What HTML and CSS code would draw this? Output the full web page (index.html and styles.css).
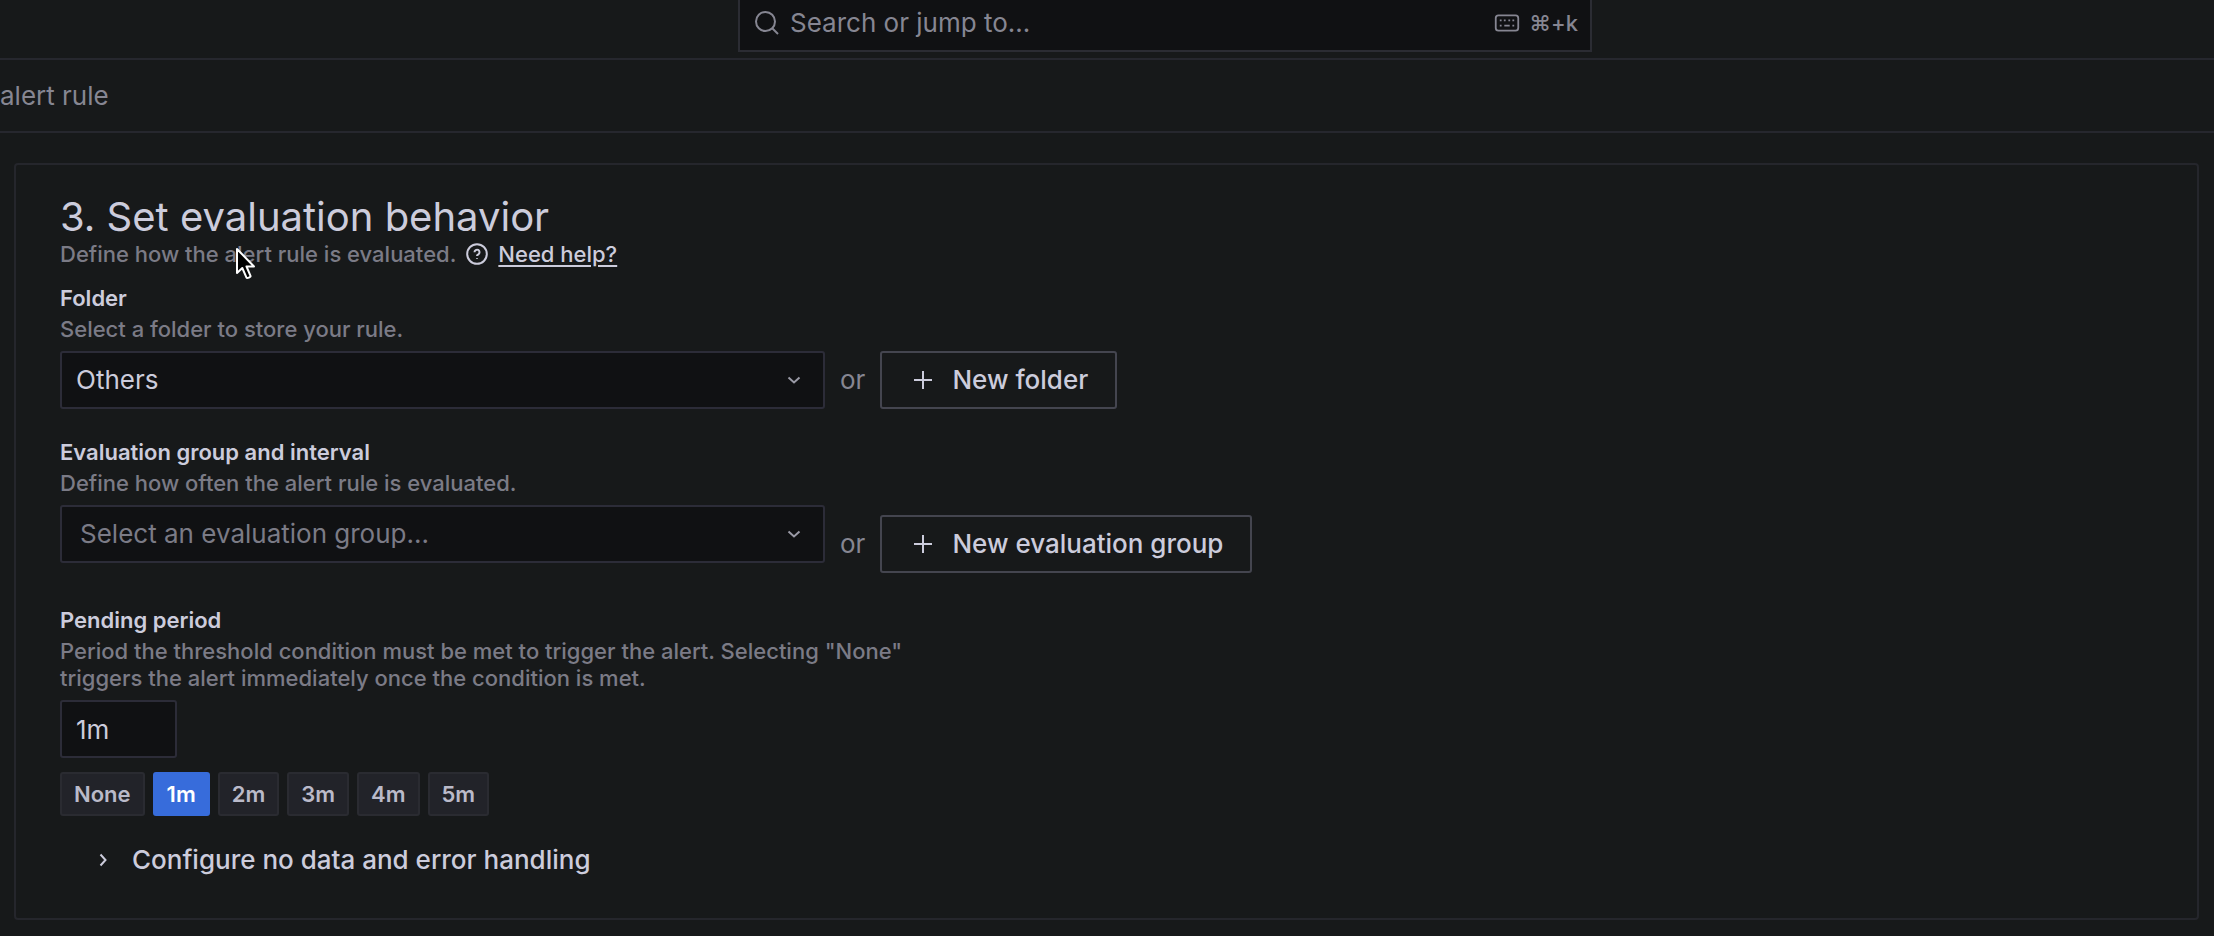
FILE: index.html
```html
<!DOCTYPE html>
<html lang="en">
<head>
<meta charset="utf-8">
<title>Alert rule</title>
<link rel="stylesheet" href="styles.css">
</head>
<body>
<header class="topbar">
  <label class="search">
    <svg class="search-icon" viewBox="0 0 26 26" aria-hidden="true"><circle cx="11.5" cy="11.5" r="9.5"/><path d="M18.5 18.5 24 24"/></svg>
    <input class="search-input" type="text" placeholder="Search or jump to..." aria-label="Search or jump to">
    <svg class="keyboard-icon" viewBox="0 0 28 20" aria-hidden="true"><rect x="1.5" y="1.5" width="25" height="17" rx="3"/><path d="M6 7h2M10.500 7h2M15.500 7h2M20 7h2M6 13h2M11 13h6M20 13h2"/></svg>
    <span class="shortcut">⌘+k</span>
  </label>
</header>
<nav class="breadcrumbs" aria-label="Breadcrumbs"><span>alert rule</span></nav>
<main class="panel">
  <h2 class="title">3. Set evaluation behavior</h2>
  <div class="intro">
    <span>Define how the alert rule is evaluated.</span>
    <svg class="help-icon" viewBox="0 0 22 22" aria-hidden="true"><circle cx="11" cy="11" r="9.800"/><path d="M8.500 9.200a2.500 2.500 0 1 1 3.800 2.100c-.9.500-1.300.8-1.300 1.600M11 15.200v.9"/></svg>
    <a class="help-link" href="#help">Need help?</a>
  </div>

  <section class="field">
    <label class="label" for="folder">Folder</label>
    <p class="description">Select a folder to store your rule.</p>
    <div class="row">
      <div class="select">
        <select id="folder"><option>Others</option></select>
        <svg class="caret" viewBox="0 0 14 14" aria-hidden="true"><path d="m1.500 4.500 5.500 5 5.500-5"/></svg>
      </div>
      <span class="or">or</span>
      <button class="button" type="button"><svg class="plus" viewBox="0 0 20 20" aria-hidden="true"><path d="M10 1v18M1 10h18"/></svg>New folder</button>
    </div>
  </section>

  <section class="field">
    <label class="label" for="group">Evaluation group and interval</label>
    <p class="description">Define how often the alert rule is evaluated.</p>
    <div class="row row-tall">
      <div class="select select-empty">
        <select id="group"><option>Select an evaluation group...</option></select>
        <svg class="caret" viewBox="0 0 14 14" aria-hidden="true"><path d="m1.500 4.500 5.500 5 5.500-5"/></svg>
      </div>
      <span class="or">or</span>
      <button class="button" type="button"><svg class="plus" viewBox="0 0 20 20" aria-hidden="true"><path d="M10 1v18M1 10h18"/></svg>New evaluation group</button>
    </div>
  </section>

  <section class="field field-last">
    <label class="label" for="pending">Pending period</label>
    <p class="description">Period the threshold condition must be met to trigger the alert. Selecting "None"<br>triggers the alert immediately once the condition is met.</p>
    <input class="period" id="pending" type="text" value="1m">
    <div class="chips">
      <button class="chip" type="button">None</button>
      <button class="chip chip-active" type="button">1m</button>
      <button class="chip" type="button">2m</button>
      <button class="chip" type="button">3m</button>
      <button class="chip" type="button">4m</button>
      <button class="chip" type="button">5m</button>
    </div>
  </section>

  <button class="collapse" type="button" aria-expanded="false"><svg class="chevron" viewBox="0 0 14 14" aria-hidden="true"><path d="m4.500 1.500 5 5.500-5 5.500"/></svg>Configure no data and error handling</button>
</main>
<svg class="cursor" viewBox="0 0 22 34" aria-hidden="true"><path d="M2 2v24l5.300-5 4.200 9.600c.5 1.100 4.500-.5 4-1.700L11.500 19.500H19z"/></svg>
</body>
</html>
```

FILE: styles.css
```css
* { box-sizing: border-box; }

body {
  margin: 0;
  background: #17191a;
  color: #ccccdc;
  font-family: Inter, "Liberation Sans", sans-serif;
  font-size: 26px;
  line-height: 30px;
}

svg { fill: none; stroke: currentColor; stroke-width: 2; flex: none; }

button, input, select { font: inherit; color: inherit; }

.topbar {
  display: grid;
  grid-template-columns: 738fr 854fr 622fr;
  height: 60px;
  border-bottom: 2px solid #26272e;
}

.search {
  grid-column: 2;
  display: flex;
  align-items: center;
  height: 52px;
  padding: 0 12px 5px 14px;
  border: 2px solid #2b2c33;
  border-top: 0;
  background: #101113;
  color: #868692;
}

.search-icon { width: 26px; height: 26px; }

.search-input {
  flex: 1;
  min-width: 0;
  padding: 0 0 0 10px;
  border: 0;
  outline: 0;
  background: transparent;
}

.search-input::placeholder { color: inherit; opacity: 1; }
.keyboard-icon { width: 26px; height: 18px; margin-right: 9px; }
.shortcut { font-size: 22px; font-weight: 500; }

.breadcrumbs {
  height: 73px;
  padding: 21px 0;
  border-bottom: 2px solid #26272e;
  color: #868692;
}

.panel {
  margin: 30px 15px 16px 14px;
  padding: 29px 44px 40px;
  border: 2px solid #25262c;
  border-radius: 4px;
}

.title {
  margin: 0;
  font-size: 40px;
  font-weight: 400;
  line-height: 46px;
}

.intro {
  display: flex;
  align-items: center;
  margin-bottom: 17px;
  color: #7b7b86;
  font-size: 22px;
  font-weight: 500;
  line-height: 28px;
}

.help-icon { width: 22px; height: 22px; margin: 0 10px; color: #ccccdc; }
.help-link { color: #ccccdc; text-underline-offset: 3px; }

.field { margin-bottom: 30px; }
.field-last { margin-bottom: 26px; }

.label {
  display: block;
  margin-bottom: 4px;
  font-size: 22px;
  font-weight: 600;
  line-height: 27px;
}

.description {
  margin: 0 0 8px;
  color: #7b7b86;
  font-size: 22px;
  font-weight: 500;
  line-height: 27px;
}

.row { display: flex; align-items: flex-end; gap: 15px; color: #868692; }
.row-tall { height: 68px; margin-bottom: 34px; }

.select {
  display: grid;
  align-self: flex-start;
  width: 765px;
  color: #ccccdc;
}

.select select {
  grid-area: 1 / 1;
  height: 58px;
  padding: 0 56px 0 14px;
  border: 2px solid #2c2c38;
  border-radius: 3px;
  appearance: none;
  background: #101113;
}

.select-empty select { padding-left: 18px; color: #7b7b86; }

.caret {
  grid-area: 1 / 1;
  align-self: center;
  justify-self: end;
  width: 14px;
  height: 14px;
  margin-right: 24px;
  color: #9a9aa6;
  pointer-events: none;
}

.or { line-height: 58px; }

.button {
  display: flex;
  align-items: center;
  gap: 19px;
  height: 58px;
  padding: 0 27px 0 31px;
  border: 2px solid #44454f;
  border-radius: 3px;
  background: transparent;
  color: #ccccdc;
  font-weight: 500;
}

.plus { width: 20px; height: 20px; }

.period {
  display: block;
  width: 117px;
  height: 58px;
  padding: 0 14px;
  border: 2px solid #2c2c38;
  border-radius: 3px;
  background: #101113;
}

.chips { display: flex; gap: 8px; margin-top: 14px; }

.chip {
  height: 44px;
  padding: 0 12px;
  border: 2px solid #2a2b31;
  border-radius: 3px;
  background: #222329;
  color: #babac9;
  font-size: 22px;
  font-weight: 600;
}

.chip-active { border-color: #376cdb; background: #376cdb; color: #fff; }

.collapse {
  display: flex;
  align-items: center;
  gap: 22px;
  margin-left: 36px;
  padding: 0;
  border: 0;
  background: transparent;
  font-weight: 500;
  line-height: 36px;
}

.chevron { width: 14px; height: 14px; }

.cursor {
  position: absolute;
  top: 247px;
  left: 235px;
  width: 22px;
  height: 34px;
  fill: #000;
  stroke: #fff;
  stroke-linejoin: round;
}
```
